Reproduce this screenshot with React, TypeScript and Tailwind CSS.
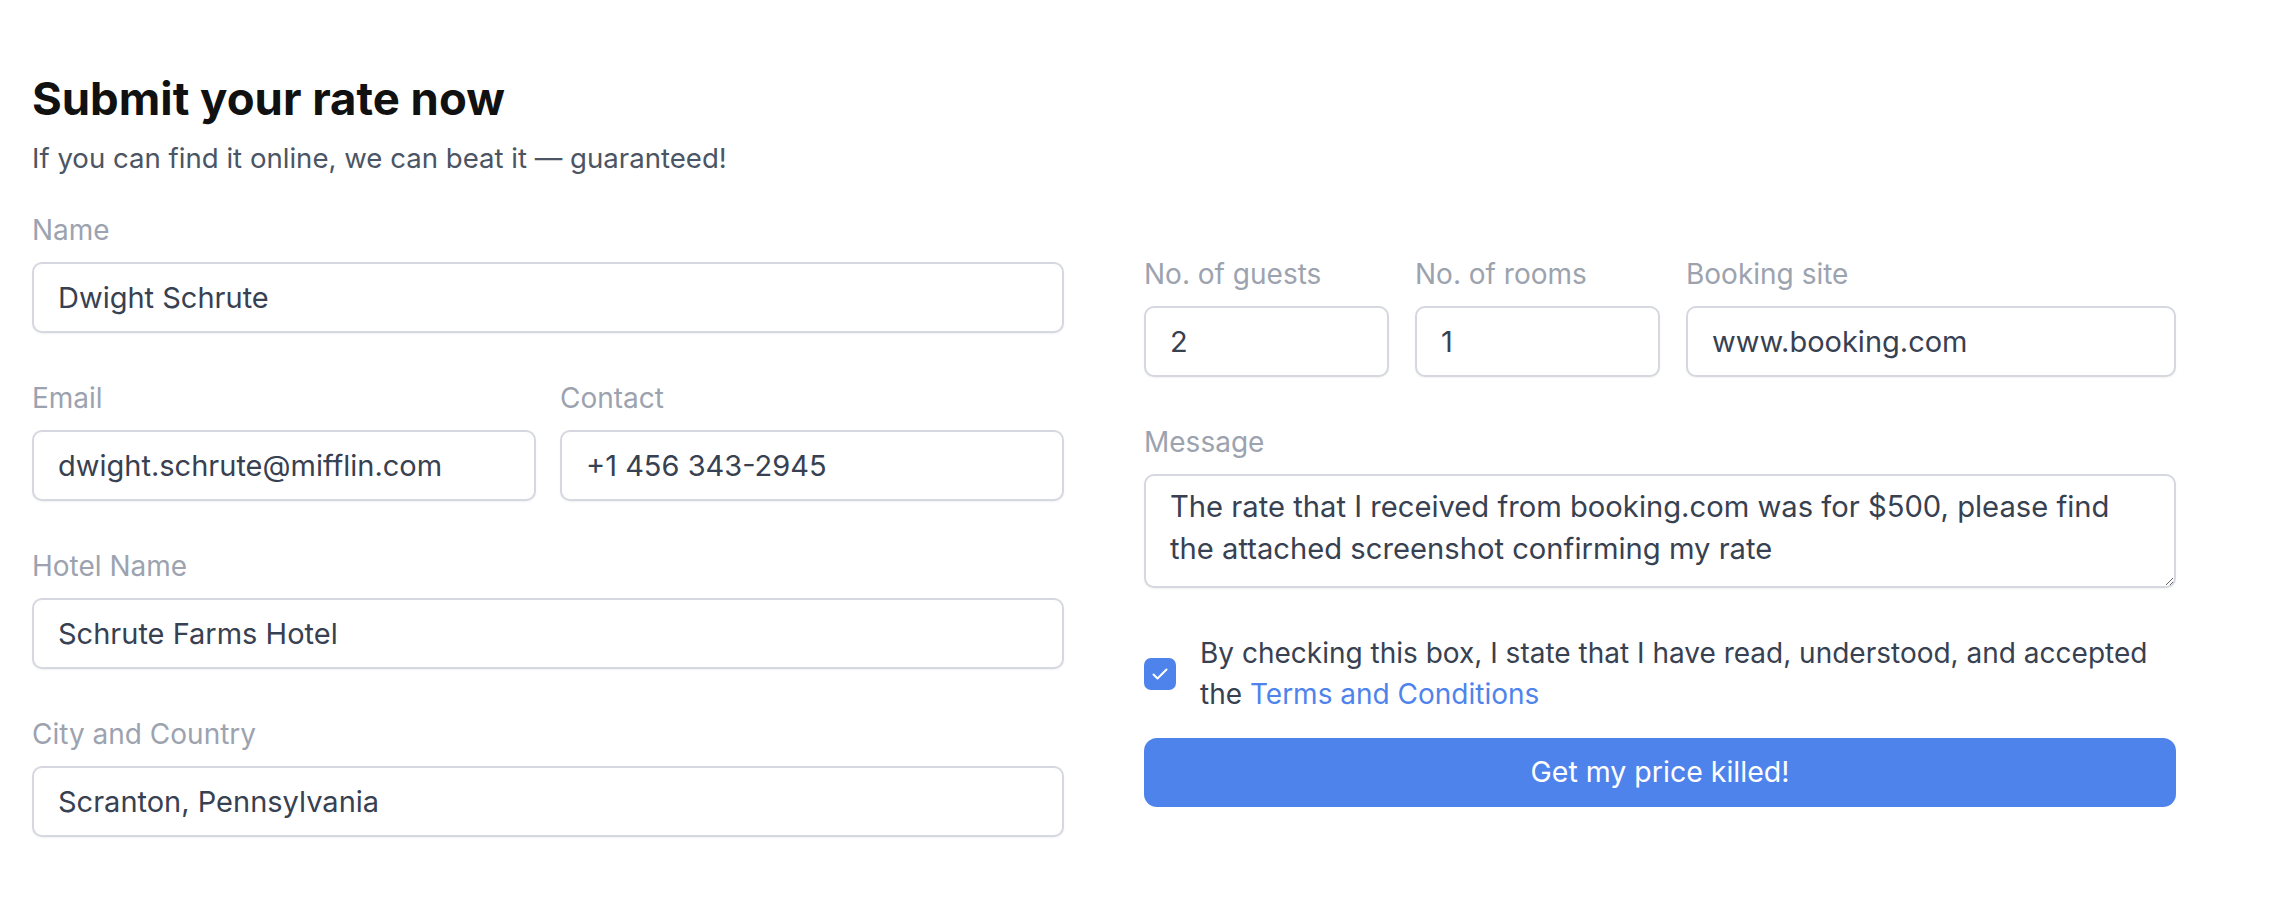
import React from "react";

const inputCls =
  "block w-full h-[71px] rounded-[10px] border-2 border-[#d5d8de] bg-white px-[24px] text-[29px] text-[#374151] shadow-[0_1px_2px_rgba(0,0,0,0.06)] outline-none";
const labelCls = "block text-[28px] leading-[40px] text-[#9ca3af]";

function Field({ label, value }: { label: string; value: string }) {
  return (
    <div className="flex flex-col">
      <label className={labelCls}>{label}</label>
      <input className={inputCls + " mt-[12px]"} defaultValue={value} />
    </div>
  );
}

export default function App() {
  return (
    <div
      className="min-h-[918px] w-full bg-white px-[32px] pt-[74px]"
      style={{ fontFamily: "Inter, 'Noto Sans', sans-serif" }}
    >
      <h1 className="text-[45.5px] font-bold leading-[50px] text-[#111111]">
        Submit your rate now
      </h1>
      <p className="mt-[14px] text-[27.6px] leading-[40px] text-[#4b5563]">
        If you can find it online, we can beat it — guaranteed!
      </p>

      <div className="mt-[32px] grid w-[2144px] grid-cols-2 items-start gap-x-[80px]">
        {/* Left column */}
        <div className="flex flex-col gap-y-[45px]">
          <Field label="Name" value="Dwight Schrute" />
          <div className="grid grid-cols-2 gap-x-[24px]">
            <Field label="Email" value="dwight.schrute@mifflin.com" />
            <Field label="Contact" value="+1 456 343-2945" />
          </div>
          <Field label="Hotel Name" value="Schrute Farms Hotel" />
          <Field label="City and Country" value="Scranton, Pennsylvania" />
        </div>

        {/* Right column */}
        <div className="flex flex-col pt-[44px]">
          <div className="grid grid-cols-[1fr_1fr_2fr] gap-x-[26px]">
            <Field label="No. of guests" value="2" />
            <Field label="No. of rooms" value="1" />
            <Field label="Booking site" value="www.booking.com" />
          </div>
          <div className="mt-[45px] flex flex-col">
            <label className={labelCls}>Message</label>
            <textarea
              className="mt-[12px] block h-[114px] w-full resize-y rounded-[10px] border-2 border-[#d5d8de] bg-white px-[24px] py-[10px] text-[29.2px] leading-[42px] text-[#374151] shadow-[0_1px_2px_rgba(0,0,0,0.06)] outline-none"
              defaultValue="The rate that I received from booking.com was for $500, please find the attached screenshot confirming my rate"
            />
          </div>
          <div className="mt-[45px] flex items-start gap-x-[24px]">
            <span className="mt-[25px] flex h-[32px] w-[32px] shrink-0 items-center justify-center rounded-[7px] bg-[#4f83ec]">
              <svg width="20" height="20" viewBox="0 0 20 20" fill="none">
                <path
                  d="M3.5 10.5l4 4L16.5 5.5"
                  stroke="white"
                  strokeWidth="2"
                  strokeLinecap="round"
                  strokeLinejoin="round"
                />
              </svg>
            </span>
            <p className="text-[28px] leading-[41px] text-[#374151]">
              By checking this box, I state that I have read, understood, and accepted
              <br />
              the <span className="text-[#4f83ec]">Terms and Conditions</span>
            </p>
          </div>
          <button className="mt-[23px] flex h-[69px] w-full items-center justify-center rounded-[13px] bg-[#4f83ec] text-[28.5px] text-white">
            Get my price killed!
          </button>
        </div>
      </div>
    </div>
  );
}
